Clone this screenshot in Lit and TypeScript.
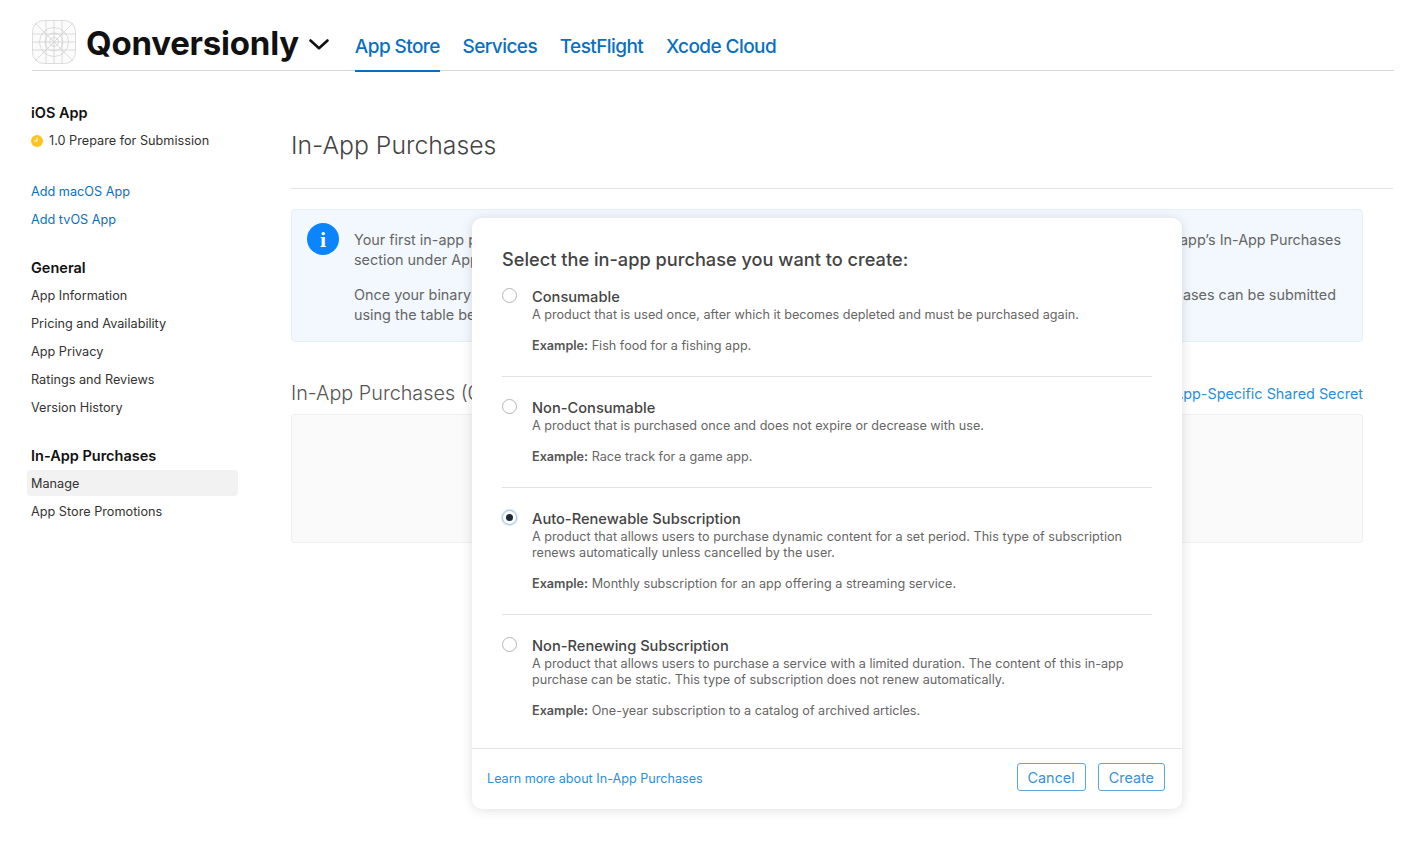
import { LitElement, html, css, svg } from 'lit';
import { customElement } from 'lit/decorators.js';

const OPTIONS = [
  {
    title: 'Consumable',
    text: ['A product that is used once, after which it becomes depleted and must be purchased again.'],
    example: 'Fish food for a fishing app.',
  },
  {
    title: 'Non-Consumable',
    text: ['A product that is purchased once and does not expire or decrease with use.'],
    example: 'Race track for a game app.',
  },
  {
    title: 'Auto-Renewable Subscription',
    text: [
      'A product that allows users to purchase dynamic content for a set period. This type of subscription',
      'renews automatically unless cancelled by the user.',
    ],
    example: 'Monthly subscription for an app offering a streaming service.',
    checked: true,
  },
  {
    title: 'Non-Renewing Subscription',
    text: [
      'A product that allows users to purchase a service with a limited duration. The content of this in-app',
      'purchase can be static. This type of subscription does not renew automatically.',
    ],
    example: 'One-year subscription to a catalog of archived articles.',
  },
];

// the grey app icon template
const appIcon = svg`<svg class="app-icon" width="44" height="44" viewBox="0 0 44 44" fill="none" stroke="#cfcfcf" stroke-width=".7">
  <rect x=".5" y=".5" width="43" height="43" rx="11" fill="#fbfbfb"/>
  <path d="M3 3l38 38M41 3L3 41M22 .5v43M.5 22h43M14 .5v43M30 .5v43M.5 14h43M.5 30h43"/>
  <circle cx="22" cy="22" r="14.5"/><circle cx="22" cy="22" r="9"/><circle cx="22" cy="22" r="4.5"/>
</svg>`;

@customElement('app-root')
export class AppRoot extends LitElement {
  static styles = css`
    :host {
      display: block;
      position: relative;
      height: 846px;
      overflow: hidden;
      background: #fff;
      font-family: Inter, 'Liberation Sans', sans-serif;
      color: #333;
    }
    a { color: inherit; text-decoration: none; }

    .header {
      display: flex;
      align-items: flex-start;
      height: 70px;
      margin: 0 28px 0 32px;
      border-bottom: 1px solid #d6d6d6;
    }
    .brand {
      display: flex;
      align-items: center;
      height: 44px;
      margin: 20px 0 0;
      gap: 10px;
    }
    .app-icon { flex: none; }
    .brand-name {
      margin-top: 2px;
      font-size: 33px;
      font-weight: 700;
      color: #111;
      letter-spacing: -0.22px;
    }
    .chev { margin-top: 5px; }
    .tabs { display: flex; gap: 22.7px; margin-left: 26px; height: 72px; }
    .tab {
      display: block;
      box-sizing: border-box;
      height: 72px;
      padding-top: 34px;
      font-size: 19px;
      line-height: 25px;
      font-weight: 500;
      letter-spacing: -0.58px;
      color: #0a6fc2;
    }
    .tab.active { border-bottom: 2px solid #0a6fc2; }

    .page { display: flex; margin: 0 29px 0 31px; }
    .side { width: 260px; flex: none; padding-top: 32px; }
    .side h3 {
      margin: 0;
      font-size: 14.5px;
      line-height: 20px;
      font-weight: 600;
      color: #111;
    }
    .side .group { margin-top: 24px; }
    .side .item {
      display: block;
      font-size: 12.7px;
      line-height: 28px;
      color: #333;
    }
    .side .item.link { color: #0a6fc2; }
    .side .status { display: flex; align-items: center; gap: 6px; margin-top: 4px; margin-bottom: 23px; }
    .side .status svg { flex: none; }
    .side .selected {
      width: 207px;
      height: 26px;
      margin: 1px 0 2px -4px;
      padding-left: 4px;
      line-height: 28px;
      border-radius: 4px;
      background: #f2f2f2;
    }
    .side .group.iap { margin-top: 24px; }
    .side .group.iap h3 { margin-bottom: 4px; }
    .side .group.gen h3 { margin-bottom: 4px; }

    .main { flex: 1; min-width: 0; }
    .main h1 {
      margin: 0;
      padding: 57px 0 26px;
      height: 34px;
      font-size: 24.75px;
      line-height: 34px;
      font-weight: 300;
      color: #444;
      border-bottom: 1px solid #e3e3e3;
    }
    .notice {
      display: flex;
      gap: 15px;
      box-sizing: border-box;
      height: 133px;
      margin: 20px 30px 0 0;
      padding: 13px 21px 13px 15px;
      border: 1px solid #e4eff8;
      border-radius: 4px;
      background: #f2f8fe;
      font-size: 14.4px;
      line-height: 20px;
      color: #666;
    }
    .info {
      flex: none;
      width: 32px;
      height: 32px;
      border-radius: 50%;
      background: #0a84ff;
      color: #fff;
      font: 700 22px/33px 'Liberation Serif', serif;
      text-align: center;
    }
    .notice-text { flex: 1; padding-top: 7px; }
    .notice p { margin: 0 0 15px; }
    .line { display: flex; justify-content: space-between; }
    .line.tail { padding-right: 5px; }
    .table-head {
      display: flex;
      justify-content: space-between;
      align-items: flex-start;
      margin: 37px 30px 0 0;
      height: 35px;
      line-height: 28px;
    }
    .table-head h2 { margin: 0; font-size: 19.8px; font-weight: 300; color: #555; }
    .table-head a { margin-top: 1px; font-size: 14.4px; color: #2b8fdc; }
    .empty {
      height: 127px;
      margin-right: 30px;
      border: 1px solid #efefef;
      border-radius: 3px;
      background: #fafafa;
    }

    .modal {
      position: absolute;
      left: 472px;
      top: 218px;
      width: 710px;
      height: 591px;
      box-sizing: border-box;
      display: flex;
      flex-direction: column;
      background: #fff;
      border-radius: 10px;
      box-shadow: 0 1px 12px rgba(0, 0, 0, 0.13);
    }
    .modal-body { flex: 1; padding: 29px 30px 0; }
    .modal h2 {
      margin: 0;
      font-size: 18.2px;
      line-height: 25px;
      font-weight: 500;
      color: #444;
    }
    .option {
      display: flex;
      gap: 15px;
      padding: 21px 0 22px;
      border-bottom: 1px solid #e3e3e3;
    }
    .option.first { padding-top: 15px; }
    .option:last-child { border-bottom: none; padding-bottom: 0; }
    .radio {
      flex: none;
      box-sizing: border-box;
      width: 15px;
      height: 15px;
      margin-top: 1px;
      border: 1px solid #b5b5b5;
      border-radius: 50%;
      background: #fff;
    }
    .radio.on {
      border-color: #a9c4e0;
      background: #fff;
      box-shadow: 0 0 0 1px #d7e6f5;
      display: flex;
      align-items: center;
      justify-content: center;
    }
    .radio.on::after {
      content: '';
      width: 7px;
      height: 7px;
      border-radius: 50%;
      background: #1c2a3a;
    }
    .option-title { font-size: 14.65px; line-height: 20px; font-weight: 500; color: #444; }
    .option-text { font-size: 12.64px; line-height: 16px; color: #666; }
    .option-text span { display: block; }
    .example { margin-top: 15px; font-size: 12.64px; line-height: 16px; color: #666; }
    .example b { font-weight: 600; color: #555; }

    .modal-foot {
      display: flex;
      align-items: center;
      height: 61px;
      box-sizing: border-box;
      padding: 0 17px 4px 15px;
      border-top: 1px solid #e3e3e3;
      font-size: 12.64px;
    }
    .modal-foot a { flex: 1; margin-top: 2px; color: #2b8fdc; }
    .btn {
      box-sizing: border-box;
      height: 28px;
      margin-left: 12px;
      padding: 0 10px;
      border: 1px solid #5ba4de;
      border-radius: 3px;
      background: #fff;
      color: #3d8fd6;
      font: 14.4px Inter, sans-serif;
    }
  `;

  render() {
    return html`
      <div class="header">
        <div class="brand">
          ${appIcon}
          <span class="brand-name">Qonversionly</span>
          <svg class="chev" width="20" height="11" viewBox="0 0 20 11" fill="none" stroke="#111" stroke-width="2.6" stroke-linecap="round" stroke-linejoin="round"><path d="M1.5 1.5L10 9.2l8.5-7.7"/></svg>
        </div>
        <nav class="tabs">
          <a class="tab active">App Store</a>
          <a class="tab">Services</a>
          <a class="tab">TestFlight</a>
          <a class="tab">Xcode Cloud</a>
        </nav>
      </div>
      <div class="page">
        <aside class="side">
          <h3>iOS App</h3>
          <div class="item status">
            <svg width="12" height="12" viewBox="0 0 12 12"><circle cx="6" cy="6" r="6" fill="#fdc41f"/><path d="M6 2.5V6H3.2" fill="none" stroke="#fff" stroke-width="1"/></svg>
            1.0 Prepare for Submission
          </div>
          <a class="item link">Add macOS App</a>
          <a class="item link">Add tvOS App</a>
          <div class="group gen">
            <h3>General</h3>
            <a class="item">App Information</a>
            <a class="item">Pricing and Availability</a>
            <a class="item">App Privacy</a>
            <a class="item">Ratings and Reviews</a>
            <a class="item">Version History</a>
          </div>
          <div class="group iap">
            <h3>In-App Purchases</h3>
            <a class="item selected">Manage</a>
            <a class="item">App Store Promotions</a>
          </div>
        </aside>
        <main class="main">
          <h1>In-App Purchases</h1>
          <div class="notice">
            <div class="info">i</div>
            <div class="notice-text">
              <p>
                <span class="line"><span>Your first in-app p</span><span>app’s In-App Purchases</span></span>
                <span class="line"><span>section under App</span></span>
              </p>
              <p>
                <span class="line tail"><span>Once your binary</span><span>ases can be submitted</span></span>
                <span class="line"><span>using the table be</span></span>
              </p>
            </div>
          </div>
          <div class="table-head">
            <h2>In-App Purchases (0)</h2>
            <a>App-Specific Shared Secret</a>
          </div>
          <div class="empty"></div>
        </main>
      </div>
      <div class="modal">
        <div class="modal-body">
          <h2>Select the in-app purchase you want to create:</h2>
          ${OPTIONS.map(
            (o, i) => html`
              <div class="option ${i === 0 ? 'first' : ''}">
                <div class="radio ${o.checked ? 'on' : ''}"></div>
                <div>
                  <div class="option-title">${o.title}</div>
                  <div class="option-text">${o.text.map((t) => html`<span>${t}</span>`)}</div>
                  <div class="example"><b>Example:</b> ${o.example}</div>
                </div>
              </div>
            `,
          )}
        </div>
        <div class="modal-foot">
          <a>Learn more about In-App Purchases</a>
          <button class="btn">Cancel</button>
          <button class="btn">Create</button>
        </div>
      </div>
    `;
  }
}
